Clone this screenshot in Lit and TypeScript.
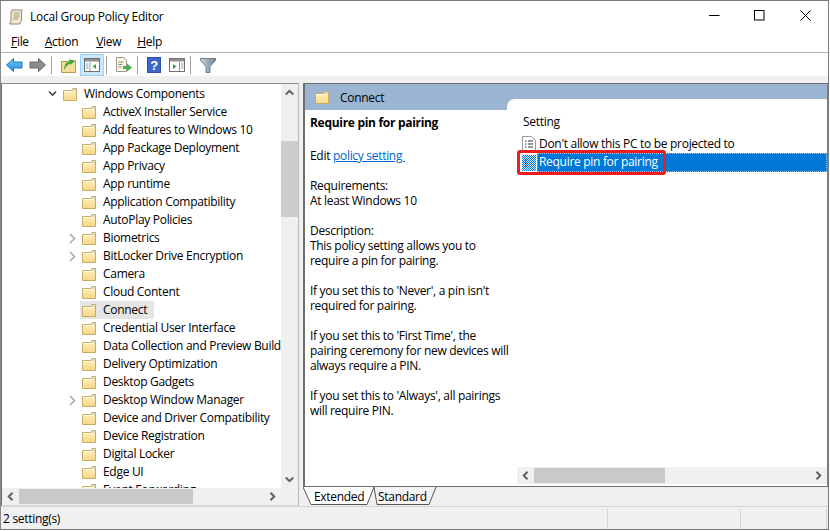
import { LitElement, html, css } from "lit";
import { customElement } from "lit/decorators.js";

const folder = html`<svg class="ico" width="14" height="13" viewBox="0 0 14 13">
  <defs><linearGradient id="fg" x1="0" y1="0" x2="0" y2="1"><stop offset="0" stop-color="#fff3c4"/><stop offset="1" stop-color="#f6d88a"/></linearGradient></defs>
  <path d="M.5 2.500h8.500l1-2h3.500v12h-13z" fill="url(#fg)" stroke="#c8aa66"/>
  <path d="M1 3.500h8.500" stroke="#fffbe6"/><path d="M10.500 1.500h2.500v1h-2.500z" fill="#9cc6ea"/>
</svg>`;

const chevDown = html`<svg class="tw" width="11" height="8" viewBox="0 0 11 8"><path d="M2 1.500l3.500 3.500 3.500-3.500" fill="none" stroke="#444" stroke-width="1.600"/></svg>`;
const chevRight = html`<svg class="tw" width="11" height="11" viewBox="0 0 11 11"><path d="M3 1l4.500 4.500-4.500 4.500" fill="none" stroke="#a6a6a6" stroke-width="1.500"/></svg>`;

const items: [string, boolean?, boolean?][] = [
  ["ActiveX Installer Service"], ["Add features to Windows 10"], ["App Package Deployment"], ["App Privacy"],
  ["App runtime"], ["Application Compatibility"], ["AutoPlay Policies"], ["Biometrics", true],
  ["BitLocker Drive Encryption", true], ["Camera"], ["Cloud Content"], ["Connect", false, true],
  ["Credential User Interface"], ["Data Collection and Preview Builds"], ["Delivery Optimization"], ["Desktop Gadgets"],
  ["Desktop Window Manager", true], ["Device and Driver Compatibility"], ["Device Registration"], ["Digital Locker"],
  ["Edge UI"], ["Event Forwarding"],
];

const desc = [
  "Requirements:\nAt least Windows 10",
  "Description:\nThis policy setting allows you to\nrequire a pin for pairing.",
  "If you set this to 'Never', a pin isn't\nrequired for pairing.",
  "If you set this to 'First Time', the\npairing ceremony for new devices will\nalways require a PIN.",
  "If you set this to 'Always', all pairings\nwill require PIN.",
];

const arrow = (d: string) => html`<svg width="9" height="9" viewBox="0 0 9 9"><path d="${d}" fill="none" stroke="#606060" stroke-width="2"/></svg>`;
const L = arrow("M6.500 .8l-3.700 3.700 3.700 3.700");
const R = arrow("M2.500 .8l3.700 3.700-3.700 3.700");
const U = arrow("M.8 6.500l3.700-3.700 3.700 3.700");
const D = arrow("M.8 2.500l3.700 3.700 3.700-3.700");

@customElement("app-root")
export class AppRoot extends LitElement {
  static styles = css`
    :host { display: block; width: 830px; height: 531px; background: #fff; overflow: hidden;
      font-family: "Open Sans", "Noto Sans", sans-serif; font-size: 12px; letter-spacing: -0.3px; color: #000; }
    .win { width: 829px; height: 530px; box-sizing: border-box; border: 1px solid #7b7b7b; border-left-color:#8a8a8a; display: flex; flex-direction: column; background: #fff; }
    .title { height: 31px; flex: none; display: flex; align-items: center; padding-left: 7px; gap: 6px; }
    .title .t { flex: 1; letter-spacing: -0.24px; }
    .caps { display: flex; align-items: center; padding-right: 17px; padding-bottom: 2px; }
    .caps svg + svg { margin-left: 34px; }
    .caps svg:last-child { margin-left: 35px; }
    .menu { height: 21px; flex: none; display: flex; align-items: center; padding: 0 0 2px 10px; border-bottom: 1px solid #b0b0b8; box-sizing: border-box; }
    .menu span { margin-right: 16px; }
    .menu span:nth-child(2) { margin-right: 18px; }
    .menu u { text-underline-offset: 1px; }
    .tools { height: 23px; flex: none; display: flex; align-items: center; padding: 1px 0 0 5px; box-sizing: border-box; }
    .tools .sep { width: 1px; height: 18px; background: #a0a0a0; flex: none; }
    .btn { display: flex; align-items: center; justify-content: center; height: 22px; box-sizing: border-box; flex: none; }
    .btn.on { background: #cce8ff; border: 1px solid #99d1ff; }
    .band { height: 7px; flex: none; background: #f0f0f0; }
    .main { flex: 1; min-height: 0; display: flex; background: #f0f0f0; }
    .tree { width: 298px; flex: none; display: grid; grid-template-columns: 1fr 17px; grid-template-rows: 1fr 17px; border: 1px solid #6e6e6e; border-top-color:#8a8a8a; border-right-color: #b8b8b8; border-bottom-color:#d8d8d8; box-sizing: border-box; background: #fff; min-height: 0; }
    .rows { overflow: hidden; min-height: 0; padding-top: 1px; }
    .row { height: 18px; display: flex; align-items: center; white-space: nowrap; position: relative; }
    .row .ico { flex: none; }
    .top { padding-left: 45px; }
    .child { padding-left: 80px; }
    .tw { flex: none; }
    .top .tw { margin-right: 5px; }
    .child .tw { position: absolute; left: 65px; top: 4px; }
    .item { display: flex; align-items: center; height: 18px; }
    .lbl { margin-left: 6px; padding: 0 1px; line-height: 18px; }
    .sel { background: #e5e5e5; margin-left: -2px; padding: 0 6px 0 2px; }
    .vbar { background: #f0f0f0; display: flex; flex-direction: column; align-items: center; }
    .vbar .a { height: 17px; display: flex; align-items: center; justify-content: center; flex: none; }
    .vbar .track { flex: 1; width: 100%; padding-top: 40px; box-sizing: border-box; }
    .vbar .thumb { height: 76px; background: #cdcdcd; }
    .hbar { background: #f0f0f0; display: flex; align-items: center; height: 17px; flex: none; }
    .hbar .a { width: 17px; height: 17px; flex: none; display: flex; align-items: center; justify-content: center; }
    .hbar .track { flex: 1; height: 15px; }
    .hbar .thumb { height: 15px; background: #c9c9c9; }
    .corner { background: #f0f0f0; }
    .right { flex: 1; min-width: 0; display: flex; flex-direction: column; margin-left: 4px; }
    .pane { height: 404px; flex: none; border: 1px solid #6e6e6e; border-right-color: #7b7b7b; border-left-width: 2px; box-sizing: border-box; background: #fff; display: flex; flex-direction: column; }
    .head { height: 26px; flex: none; background: #9bb4d2; display: flex; align-items: center; padding-left: 10px; gap: 11px; box-sizing: border-box; }
    .body { flex: 1; min-height: 0; display: flex; }
    .desc { width: 202px; flex: none; padding: 5px 0 0 5px; box-sizing: border-box; line-height: 15px; white-space: pre; position: relative; z-index: 2; }
    .desc h4 { margin: 0 0 18px; font-size: 12px; font-weight: 700; line-height: 15px; }
    .desc p { margin: 0 0 15px; }
    .desc a { color: #0066cc; text-decoration: underline; }
    .list { flex: 1; min-width: 0; margin-top: -11px; background: #fff; border-top-left-radius: 8px; display: flex; flex-direction: column; position: relative; z-index: 1; padding-bottom: 2px; }
    .cols { height: 21px; flex: none; padding: 14px 0 0 16px; line-height: 18px; }
    .sets { flex: 1; }
    .srow { height: 19px; display: flex; align-items: center; gap: 3px; padding-left: 15px; white-space: nowrap; }
    .srow .txt { flex: 1; line-height: 17px; }
    .srow.cur .txt { background: #0078d7; color: #fff; outline: 1px dotted #9cc6ea; outline-offset: -1px; height: 19px; line-height: 18px; padding-left: 2px; margin-left: -2px; }
    .list .hbar { margin-left: 10px; }
    .red { position: absolute; left: 10px; top: 51px; width: 149px; height: 25px; box-sizing: border-box; border: 3px solid #ef1c1c; border-radius: 3px; }
    .tabs { flex: 1; display: flex; align-items: flex-start; background: #f0f0f0; }
    .tab { position: relative; height: 18px; line-height: 19px; flex: none; box-sizing: border-box; }
    .tab svg { position: absolute; left: 0; top: 0; }
    .tab span { position: relative; }
    .ext { width: 67px; padding-left: 11px; }
    .std { width: 66px; padding-left: 8px; }
    .status { height: 23px; flex: none; background: #f0f0f0; border-top: 1px solid #d4d4d4; box-sizing: border-box; display: flex; align-items: center; padding-left: 2px; }
    .status .n { width: 604px; flex: none; padding-top: 1px; }
    .status .c { height: 20px; border-left: 1px solid #d4d4d4; flex: none; margin-top: 1px; }
    .c1 { width: 132px; }
    .c2 { width: 85px; }
  `;

  render() {
    const hbar = (w: number, thumb: number) => html`<div class="hbar" style="width:${w}px"><div class="a">${L}</div><div class="track"><div class="thumb" style="width:${thumb}px"></div></div><div class="a">${R}</div></div>`;
    return html`<div class="win">
      <div class="title">
        <svg width="16" height="16" viewBox="0 0 16 16"><path d="M4 1h10.500l-1 1.500v9l-2 3.500H1.500l1.500-2.500V3z" fill="#f2ead2" stroke="#8f8670"/><path d="M5.500 4h6M5.500 6h6M5.500 8h6M5 10h5" stroke="#a69a7a"/></svg>
        <span class="t">Local Group Policy Editor</span>
        <div class="caps">
          <svg width="11" height="11" viewBox="0 0 11 11"><path d="M0 5.500h10.500" stroke="#000"/></svg>
          <svg width="11" height="11" viewBox="0 0 11 11"><rect x=".5" y=".5" width="9.500" height="9.500" fill="none" stroke="#000"/></svg>
          <svg width="11" height="11" viewBox="0 0 11 11"><path d="M.5.500l10 10M10.500.500l-10 10" stroke="#000"/></svg>
        </div>
      </div>
      <div class="menu">
        <span><u>F</u>ile</span><span><u>A</u>ction</span><span><u>V</u>iew</span><span><u>H</u>elp</span>
      </div>
      <div class="tools">
        <svg width="17" height="14" viewBox="0 0 17 14"><defs><linearGradient id="ba" x1="0" y1="0" x2="0" y2="1"><stop offset="0" stop-color="#7cc8f6"/><stop offset="1" stop-color="#1f8fe0"/></linearGradient></defs><path d="M.5 7l7-6.500v3.500h8.500v6H7.500v3.500z" fill="url(#ba)" stroke="#1e78b8"/></svg>
        <svg style="margin-left:6px" width="17" height="14" viewBox="0 0 17 14"><path d="M16.500 7l-7-6.500v3.500H1v6h8.500v3.500z" fill="#8c8c8c" stroke="#666"/></svg>
        <div class="sep" style="margin:0 9px 0 5px"></div>
        <svg width="15" height="16" viewBox="0 0 15 16"><path d="M.5 4.500h7l1-1h6v12H.5z" fill="#f4dc98" stroke="#b59a50"/><path d="M3 13c0-5 2.500-8 5.500-8.500V2l5 2.500-4 3.500V6.500C7 7 5 9.500 3 13z" fill="#3aa63a"/></svg>
        <div class="btn on" style="width:24px;margin-left:4px"><svg width="16" height="14" viewBox="0 0 16 14"><rect x=".5" y=".5" width="15" height="13" fill="#fff" stroke="#707070"/><path d="M1 1h14v2.500H1z" fill="#8e8e8e"/><path d="M6 4v9" stroke="#999"/><path d="M12 6v5L8.500 8.500z" fill="#3aa63a"/><path d="M2 6h2.500M2 8h2.500M2 10h2.500" stroke="#8aa0b8"/></svg></div>
        <div class="sep" style="margin:0 8px 0 2px"></div>
        <svg width="17" height="16" viewBox="0 0 17 16"><path d="M1.500.5h7l3 3v11h-10z" fill="#fbf6e4" stroke="#9a9a8a"/><path d="M3.500 5h5M3.500 7.500h4M3.500 10h3" stroke="#888"/><path d="M8 9h4V6.500l5 4-5 4V12H8z" fill="#48b048"/></svg>
        <div class="sep" style="margin:0 9px 0 5px"></div>
        <svg width="14" height="16" viewBox="0 0 14 16"><rect width="14" height="16" fill="#2a4fb0"/><rect x="1" y="1" width="12" height="14" fill="#3c66cc"/><text x="7" y="13" font-size="13" font-weight="700" font-family="Liberation Sans" fill="#fff" text-anchor="middle">?</text></svg>
        <svg style="margin-left:8px" width="16" height="14" viewBox="0 0 16 14"><rect x=".5" y=".5" width="15" height="13" fill="#fff" stroke="#707070"/><path d="M1 1h14v2.500H1z" fill="#8e8e8e"/><path d="M10.500 4v9" stroke="#999"/><path d="M4 6v5l3.500-2.500z" fill="#3aa63a"/><path d="M12 6h2.500M12 8h2.500M12 10h2.500" stroke="#8aa0b8"/></svg>
        <div class="sep" style="margin:0 9px 0 5px"></div>
        <svg width="16" height="15" viewBox="0 0 16 15"><defs><linearGradient id="ff" x1="0" x2="1"><stop offset="0" stop-color="#c8d6e0"/><stop offset="1" stop-color="#6d8496"/></linearGradient></defs><path d="M.5.500h15v2l-5.500 6v6h-4v-6l-5.500-6z" fill="url(#ff)" stroke="#70808c"/></svg>
      </div>
      <div class="band"></div>
      <div class="main">
        <div class="tree">
          <div class="rows">
            <div class="row top">${chevDown}${folder}<span class="lbl">Windows Components</span></div>
            ${items.map(([n, tw, sel]) => html`<div class="row child">${tw ? chevRight : ""}<div class="item ${sel ? "sel" : ""}">${folder}<span class="lbl">${n}</span></div></div>`)}
          </div>
          <div class="vbar"><div class="a">${U}</div><div class="track"><div class="thumb"></div></div><div class="a">${D}</div></div>
          ${hbar(279, 174)}
          <div class="corner"></div>
        </div>
        <div class="right">
          <div class="pane">
            <div class="head">${folder}<span>Connect</span></div>
            <div class="body">
              <div class="desc"><h4>Require pin for pairing</h4><p>Edit <a>policy setting </a></p>${desc.map((d) => html`<p>${d}</p>`)}</div>
              <div class="list">
                <div class="cols">Setting</div>
                <div class="sets">
                  <div class="srow"><svg width="14" height="16" viewBox="0 0 14 16"><path d="M.5.500h9l4 4v11H.5z" fill="#fff" stroke="#9a9a9a"/><path d="M3 5h1.500M6 5h5M3 8h1.500M6 8h5M3 11h1.500M6 11h5" stroke="#333"/></svg><span class="txt">Don't allow this PC to be projected to</span></div>
                  <div class="srow cur"><svg width="14" height="16" viewBox="0 0 14 16"><defs><pattern id="dz" width="2" height="2" patternUnits="userSpaceOnUse"><rect width="2" height="2" fill="#0078d7"/><rect width="1" height="1" fill="#d4e9fb"/><rect x="1" y="1" width="1" height="1" fill="#d4e9fb"/></pattern></defs><rect width="14" height="16" fill="url(#dz)"/><path d="M3 5h1.500M3 8h1.500M3 11h1.500" stroke="#123"/></svg><span class="txt">Require pin for pairing</span></div>
                </div>
                ${hbar(310, 131)}
                <div class="red"></div>
              </div>
            </div>
          </div>
          <div class="tabs">
            <div class="tab ext"><svg width="72" height="19" viewBox="0 0 72 19"><path d="M0 0l8 17.500h56l7-17.500" fill="#fff" stroke="#555"/></svg><span>Extended</span></div>
            <div class="tab std"><svg width="68" height="19" viewBox="0 0 68 19"><path d="M4 0l3 17.500h52L66 0" fill="#f4f4f4" stroke="#555"/></svg><span>Standard</span></div>
          </div>
        </div>
      </div>
      <div class="status">
        <span class="n">2 setting(s)</span><div class="c c1"></div><div class="c c2"></div><div class="c"></div>
      </div>
    </div>`;
  }
}
